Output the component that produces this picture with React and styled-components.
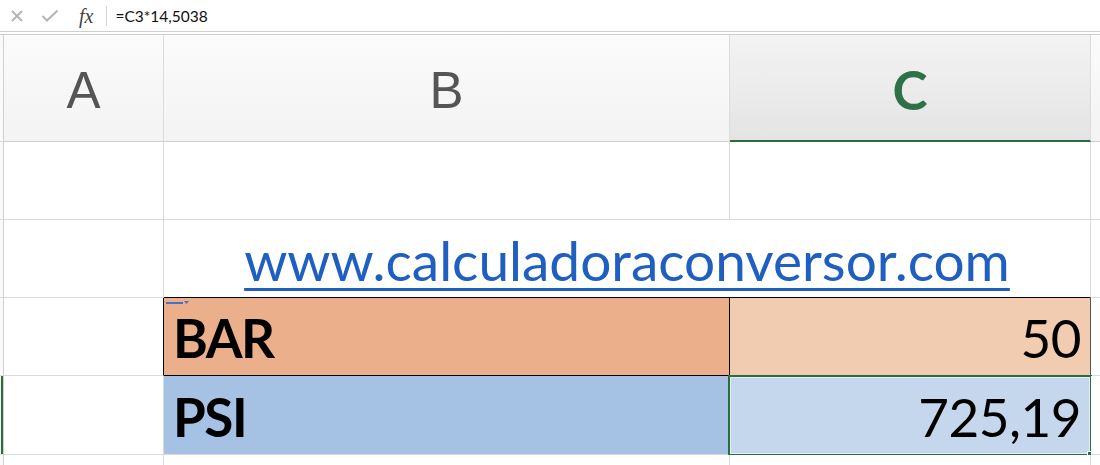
import styled, { createGlobalStyle } from 'styled-components'

const Global = createGlobalStyle`
  html, body {
    margin: 0;
    padding: 0;
    background: #ffffff;
    overflow: hidden;
  }
`

const Page = styled.div`
  width: 1100px;
  height: 465px;
  overflow: hidden;
  background: #fff;
`

const FormulaBar = styled.div`
  height: 31px;
  border-bottom: 1px solid #cfcfcf;
  display: flex;
  align-items: center;
  padding-left: 8px;
  font-family: 'Lato', 'Liberation Sans', sans-serif;
`

const BarIcon = styled.span`
  width: 18px;
  display: flex;
  justify-content: center;
  margin-right: ${(p) => p.gap || 0}px;
`

const Fx = styled.span`
  font-family: 'Liberation Serif', serif;
  font-style: italic;
  font-size: 20px;
  color: #444;
  padding-right: 13px;
  border-right: 1px solid #d6d6d6;
  line-height: 20px;
`

const Formula = styled.span`
  font-size: 15.5px;
  color: #111;
  padding-left: 8px;
`

const Spacer = styled.div`
  height: 2px;
  border-bottom: 1px solid #cfcfcf;
`

const Sheet = styled.div`
  display: grid;
  grid-template-columns: 4px 160px 566px 361px 1fr;
  grid-template-rows: 107px 78px 78px 78px 79px 78px;
`

const Cell = styled.div`
  box-sizing: border-box;
  border-right: 1px solid ${(p) => p.$right || '#dadada'};
  border-bottom: 1px solid ${(p) => p.$bottom || '#dadada'};
  background: ${(p) => p.$bg || '#fff'};
  grid-column: ${(p) => p.$span || 'auto'};
  display: flex;
  align-items: flex-end;
  justify-content: ${(p) => p.$align || 'flex-start'};
  padding: 0 9px 6px 9px;
  font-family: 'Lato', 'Carlito', sans-serif;
  font-size: 53px;
  letter-spacing: ${(p) => (p.$bold ? '-1.5px' : '-0.5px')};
  font-weight: ${(p) => (p.$bold ? 700 : 400)};
  color: #000;
  position: relative;
`

const Stub = styled.div`
  box-sizing: border-box;
  border-right: 1px solid #cfcfcf;
  border-bottom: 1px solid #dadada;
  background: #fafafa;
  position: relative;
`

const Header = styled.div`
  box-sizing: border-box;
  border-right: 1px solid #dcdcdc;
  border-bottom: ${(p) => (p.$active ? '2px solid #2b6e3e' : '1px solid #d0d0d0')};
  background: ${(p) =>
    p.$active
      ? 'linear-gradient(#f3f3f3, #e4e4e4)'
      : 'linear-gradient(#fbfbfb, #f3f3f3)'};
  display: flex;
  align-items: center;
  justify-content: center;
  font-family: ${(p) => (p.$active ? "'Lato', sans-serif" : "'Liberation Sans', sans-serif")};
  font-weight: ${(p) => (p.$active ? 700 : 400)};
  font-size: ${(p) => (p.$active ? 53 : 51)}px;
  color: ${(p) => (p.$active ? '#2e7146' : '#555')};
  padding-top: 4px;
`

const Link = styled.span`
  color: #1f5fbf;
  font-size: 55px;
  line-height: 1;
  letter-spacing: 0;
  text-decoration: underline;
  text-decoration-thickness: 3px;
  text-underline-offset: 7px;
`

const RowMark = styled.div`
  position: absolute;
  left: 1px;
  top: 0;
  bottom: 0;
  width: 2px;
  background: #2b6e3e;
`

const Selection = styled.div`
  position: absolute;
  left: -2px;
  top: -1px;
  right: -2px;
  bottom: -2px;
  border: 2px solid #2b6e3e;
  box-shadow: inset 0 0 0 1px #e6eef8;
`

const Handle = styled.div`
  position: absolute;
  right: -5px;
  bottom: -5px;
  width: 6px;
  height: 6px;
  background: #2b6e3e;
  border: 1px solid #fff;
`

const PasteMark = styled.svg`
  position: absolute;
  left: 2px;
  top: 2px;
`

export default function App() {
  return (
    <Page>
      <Global />
      <FormulaBar>
        <BarIcon gap={15}>
          <svg width="14" height="14" viewBox="0 0 14 14">
            <path d="M2 2 L12 12 M12 2 L2 12" stroke="#b4b4b4" strokeWidth="2" />
          </svg>
        </BarIcon>
        <BarIcon gap={20}>
          <svg width="18" height="14" viewBox="0 0 18 14">
            <path d="M1.5 7 L6 11.5 L16.5 1.5" stroke="#b4b4b4" strokeWidth="2" fill="none" />
          </svg>
        </BarIcon>
        <Fx>fx</Fx>
        <Formula>=C3*14,5038</Formula>
      </FormulaBar>
      <Spacer />
      <Sheet>
        <Stub />
        <Header>A</Header>
        <Header>B</Header>
        <Header $active>C</Header>
        <Header />

        <Stub />
        <Cell />
        <Cell />
        <Cell />
        <Cell />

        <Stub />
        <Cell />
        <Cell $span="span 2" $align="center" $bottom="#000" style={{ paddingBottom: 9 }}>
          <Link>www.calculadoraconversor.com</Link>
        </Cell>
        <Cell />

        <Stub />
        <Cell $right="#000" />
        <Cell $bg="#ebb08b" $bold $right="#000" $bottom="#000">
          <PasteMark width="24" height="6" viewBox="0 0 24 6">
            <rect x="0" y="2" width="17" height="2" fill="#4a6fc4" />
            <path d="M18 1 L23 1 L20.5 4 Z" fill="#4a6fc4" />
          </PasteMark>
          BAR
        </Cell>
        <Cell $bg="#f2ccb0" $align="flex-end" $right="#555" $bottom="#000">50</Cell>
        <Cell />

        <Stub>
          <RowMark />
        </Stub>
        <Cell />
        <Cell $bg="#a5c2e4" $bold $right="#a5c2e4">PSI</Cell>
        <Cell $bg="#c4d7ec" $align="flex-end">
          <Selection />
          <Handle />
          725,19
        </Cell>
        <Cell />

        <Stub />
        <Cell />
        <Cell />
        <Cell />
        <Cell />
      </Sheet>
    </Page>
  )
}
